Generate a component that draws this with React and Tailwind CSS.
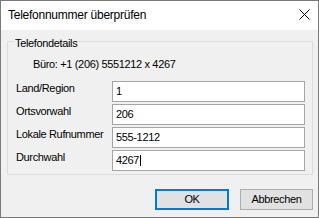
export default function App() {
  const rows = [
    { label: "Land/Region", value: "1" },
    { label: "Ortsvorwahl", value: "206" },
    { label: "Lokale Rufnummer", value: "555-1212" },
    { label: "Durchwahl", value: "4267", caret: true },
  ];

  return (
    <div className="w-[319px] h-[218px] border border-[#7a7a7a] flex flex-col bg-[#f0f0f0] font-['Liberation_Sans',Arial,sans-serif] text-black overflow-hidden">
      {/* Titelleiste */}
      <div className="h-[29px] bg-white flex justify-between pl-[7px] pr-[8px]">
        <span className="self-center text-[12px] leading-[15px] tracking-[-0.25px]">
          Telefonnummer überprüfen
        </span>
        <svg width="11" height="11" viewBox="0 0 11 11" className="mt-[8px]">
          <path d="M0.5 0.5 L10.5 10.5 M10.5 0.5 L0.5 10.5" stroke="#000" strokeWidth="1" />
        </svg>
      </div>

      <div className="flex flex-col pl-[6px] pr-[5px] text-[11px] leading-[13px] tracking-[-0.35px]">
        {/* Gruppenfeld */}
        <div className="relative mt-[11px] border border-[#dcdcdc] pt-[16px] pb-[3px]">
          <span className="absolute left-[6px] top-[-5px] px-[1px] bg-[#f0f0f0]">
            Telefondetails
          </span>
          <div className="pl-[25px]">Büro: +1 (206) 5551212 x 4267</div>
          <div className="mt-[10px] flex flex-col gap-[2px] pl-[8px] pr-[7px]">
            {rows.map((r) => (
              <div key={r.label} className="flex items-start">
                <span className="w-[96px] mt-[1px]">{r.label}</span>
                <div className="flex-1 h-[21px] bg-white border border-[#a5a5a5] flex items-center pl-[3px]">
                  <span>{r.value}</span>
                  {r.caret && <span className="inline-block w-px h-[11px] bg-black ml-[1px]" />}
                </div>
              </div>
            ))}
          </div>
        </div>

        {/* Schaltflächen */}
        <div className="mt-[14px] flex justify-end gap-[11px]">
          <button className="w-[74px] h-[21px] bg-[#e1e1e1] border-2 border-[#0078d7] flex items-center justify-center">
            OK
          </button>
          <button className="w-[73px] h-[21px] bg-[#e1e1e1] border border-[#adadad] flex items-center justify-center">
            Abbrechen
          </button>
        </div>
      </div>
    </div>
  );
}
